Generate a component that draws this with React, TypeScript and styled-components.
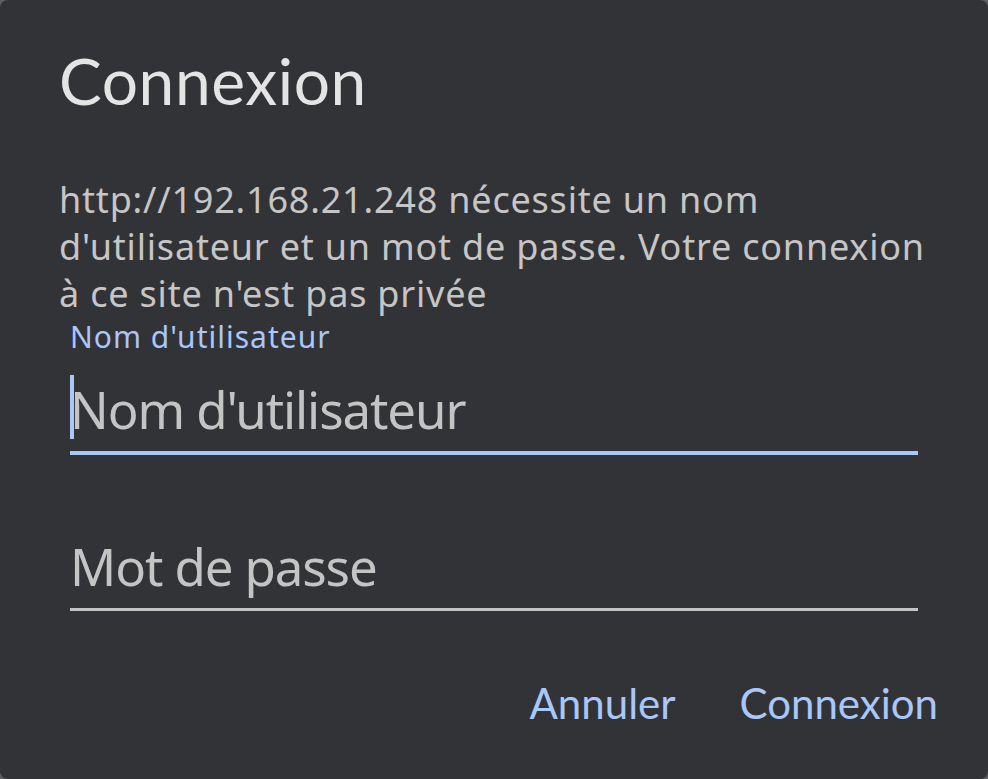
import React from "react";
import styled, { createGlobalStyle } from "styled-components";

const Global = createGlobalStyle`
  html, body {
    margin: 0;
    padding: 0;
    background: #5e5f62;
  }
  #root {
    width: 988px;
    height: 779px;
  }
`;

const Dialog = styled.div`
  box-sizing: border-box;
  width: 988px;
  height: 779px;
  background: #323337;
  border-radius: 8px;
  padding: 44px 50px 0 59px;
  display: flex;
  flex-direction: column;
`;

const Title = styled.h1`
  margin: 0;
  font-family: "Lato", "Noto Sans", sans-serif;
  font-weight: 400;
  font-size: 64px;
  letter-spacing: 0.6px;
  line-height: 74px;
  color: #e4e4e4;
`;

const Message = styled.p`
  margin: 58px 0 0 0;
  font-family: "Noto Sans", sans-serif;
  font-size: 36px;
  letter-spacing: 0.8px;
  line-height: 47px;
  color: #c6c6c6;
  max-width: 870px;
`;

const Fields = styled.div`
  margin-left: 11px;
  width: 848px;
  display: flex;
  flex-direction: column;
`;

const FloatLabel = styled.div`
  font-family: "Noto Sans", sans-serif;
  font-size: 30px;
  letter-spacing: 1px;
  line-height: 39px;
  color: #a8c7fa;
`;

const Field = styled.div<{ $focused?: boolean }>`
  box-sizing: content-box;
  height: 77px;
  margin-top: ${(p) => (p.$focused ? "18px" : "76px")};
  border-bottom: ${(p) => (p.$focused ? "4px solid #a8c7fa" : "3px solid #c4c4c4")};
  display: flex;
  align-items: flex-start;
  position: relative;
`;

const Placeholder = styled.span`
  font-family: "Noto Sans", sans-serif;
  font-size: 51px;
  letter-spacing: -1.1px;
  line-height: 71px;
  color: #c4c4c4;
  white-space: nowrap;
`;

const Caret = styled.span`
  position: absolute;
  left: 0;
  top: 1px;
  width: 4px;
  height: 64px;
  background: #a8c7fa;
`;

const Actions = styled.div`
  margin-top: 67px;
  display: flex;
  justify-content: flex-end;
  gap: 64px;
`;

const TextButton = styled.button`
  border: none;
  background: none;
  padding: 0;
  margin: 0;
  font-family: "Lato", "Noto Sans", sans-serif;
  font-size: 42px;
  line-height: 50px;
  font-weight: 400;
  color: #a8c7fa;
  cursor: pointer;
`;

export default function App() {
  return (
    <>
      <Global />
      <Dialog>
        <Title>Connexion</Title>
        <Message>
          http://192.168.21.248 nécessite un nom d'utilisateur et un mot de passe. Votre connexion à ce site n'est pas privée
        </Message>
        <Fields>
          <FloatLabel>Nom d'utilisateur</FloatLabel>
          <Field $focused>
            <Caret />
            <Placeholder>Nom d'utilisateur</Placeholder>
          </Field>
          <Field>
            <Placeholder>Mot de passe</Placeholder>
          </Field>
        </Fields>
        <Actions>
          <TextButton>Annuler</TextButton>
          <TextButton>Connexion</TextButton>
        </Actions>
      </Dialog>
    </>
  );
}
